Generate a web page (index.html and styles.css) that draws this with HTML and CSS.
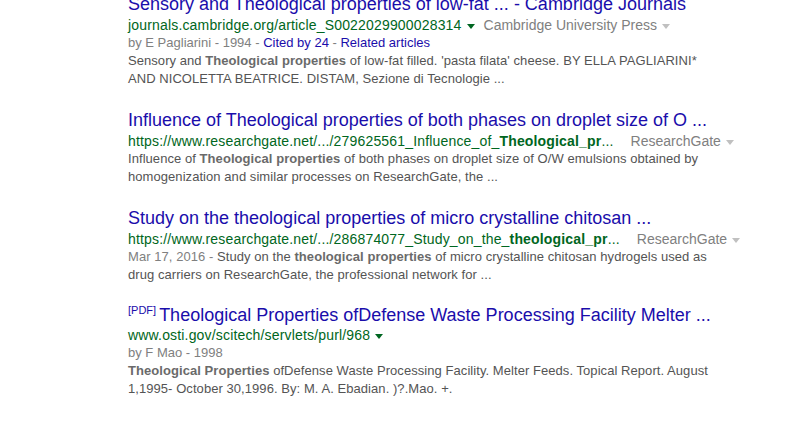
FILE: index.html
```html
<!DOCTYPE html>
<html lang="en">
<head>
  <meta charset="UTF-8">
  <meta name="viewport" content="width=device-width, initial-scale=1.0">
  <title>theological properties - Search</title>
  <link rel="stylesheet" href="styles.css">
</head>
<body>
  <div class="results">
    <div class="g">
      <h3><a href="#">Sensory and Theological properties of low-fat ... - Cambridge Journals</a></h3>
      <div class="url">
        <cite>journals.cambridge.org/article_S0022029900028314</cite><span class="arrow"></span><span class="source">Cambridge University Press</span><span class="arrow grey"></span>
      </div>
      <div class="meta">by E Pagliarini - 1994 - <a href="#">Cited by 24</a> - <a href="#">Related articles</a></div>
      <div class="st">Sensory and <b>Theological properties</b> of low-fat filled. 'pasta filata' cheese. BY ELLA PAGLIARINI* AND NICOLETTA BEATRICE. DISTAM, Sezione di Tecnologie ...</div>
    </div>

    <div class="g">
      <h3><a href="#">Influence of Theological properties of both phases on droplet size of O ...</a></h3>
      <div class="url">
        <cite>https://www.researchgate.net/.../279625561_Influence_of_<b>Theological_pr</b>...</cite><span class="source wide">ResearchGate</span><span class="arrow grey"></span>
      </div>
      <div class="st">Influence of <b>Theological properties</b> of both phases on droplet size of O/W emulsions obtained by homogenization and similar processes on ResearchGate, the ...</div>
    </div>

    <div class="g">
      <h3><a href="#">Study on the theological properties of micro crystalline chitosan ...</a></h3>
      <div class="url">
        <cite>https://www.researchgate.net/.../286874077_Study_on_the_<b>theological_pr</b>...</cite><span class="source wide">ResearchGate</span><span class="arrow grey"></span>
      </div>
      <div class="st"><span class="date">Mar 17, 2016 - </span>Study on the <b>theological properties</b> of micro crystalline chitosan hydrogels used as drug carriers on ResearchGate, the professional network for ...</div>
    </div>

    <div class="g doc">
      <h3 class="with-pdf"><span class="pdf">[PDF]</span><a href="#">Theological Properties ofDefense Waste Processing Facility Melter ...</a></h3>
      <div class="url">
        <cite>www.osti.gov/scitech/servlets/purl/968</cite><span class="arrow"></span>
      </div>
      <div class="meta">by F Mao - 1998</div>
      <div class="st"><b>Theological Properties</b> ofDefense Waste Processing Facility. Melter Feeds. Topical Report. August 1,1995- October 30,1996. By: M. A. Ebadian. )?.Mao. +.</div>
    </div>

    <div class="g">
      <h3><a href="#">Ancillary equipment and application of theological tests in the food ...</a></h3>
      <div class="url">
        <cite>www.sciencedirect.com/science/article/pii/S0260877407001234</cite><span class="arrow"></span>
      </div>
      <div class="st">Theological behaviour of materials ...</div>
    </div>
  </div>
</body>
</html>
```

FILE: styles.css
```css
body {
  margin: 0;
  padding: 0;
  background: #ffffff;
  font-family: Arial, 'Liberation Sans', sans-serif;
  color: #222;
}
.results {
  width: 590px;
  margin: -8px 0 0 128px;
}
.g {
  margin-bottom: 20px;
}
.g.doc {
  margin-bottom: 23px;
}
.g h3 {
  margin: 0;
  font-size: 18px;
  font-weight: normal;
  line-height: 24px;
  white-space: nowrap;
}
.g h3.with-pdf {
  line-height: 22px;
}
.g h3 a {
  color: #1a0dab;
  text-decoration: none;
}
.pdf {
  font-size: 11px;
  line-height: 13px;
  vertical-align: top;
  color: #1a0dab;
  margin-right: 3px;
}
.url {
  font-size: 14px;
  line-height: 18px;
  white-space: nowrap;
}
.url cite {
  font-style: normal;
  color: #006621;
  letter-spacing: 0.17px;
}
.arrow {
  display: inline-block;
  width: 0;
  height: 0;
  margin-left: 5px;
  border-top: 5px solid #006621;
  border-left: 4px solid transparent;
  border-right: 4px solid transparent;
  vertical-align: middle;
}
.arrow.grey {
  border-top-color: #c0c0c0;
}
.source {
  color: #808080;
  margin-left: 9px;
}
.source.wide {
  margin-left: 17px;
}
.meta {
  font-size: 13px;
  line-height: 18px;
  color: #808080;
}
.meta a {
  color: #1a0dab;
  text-decoration: none;
}
.st {
  font-size: 13px;
  line-height: 18px;
  color: #545454;
  letter-spacing: 0.06px;
}
.st b {
  color: #6a6a6a;
}
.date {
  color: #808080;
}
```
